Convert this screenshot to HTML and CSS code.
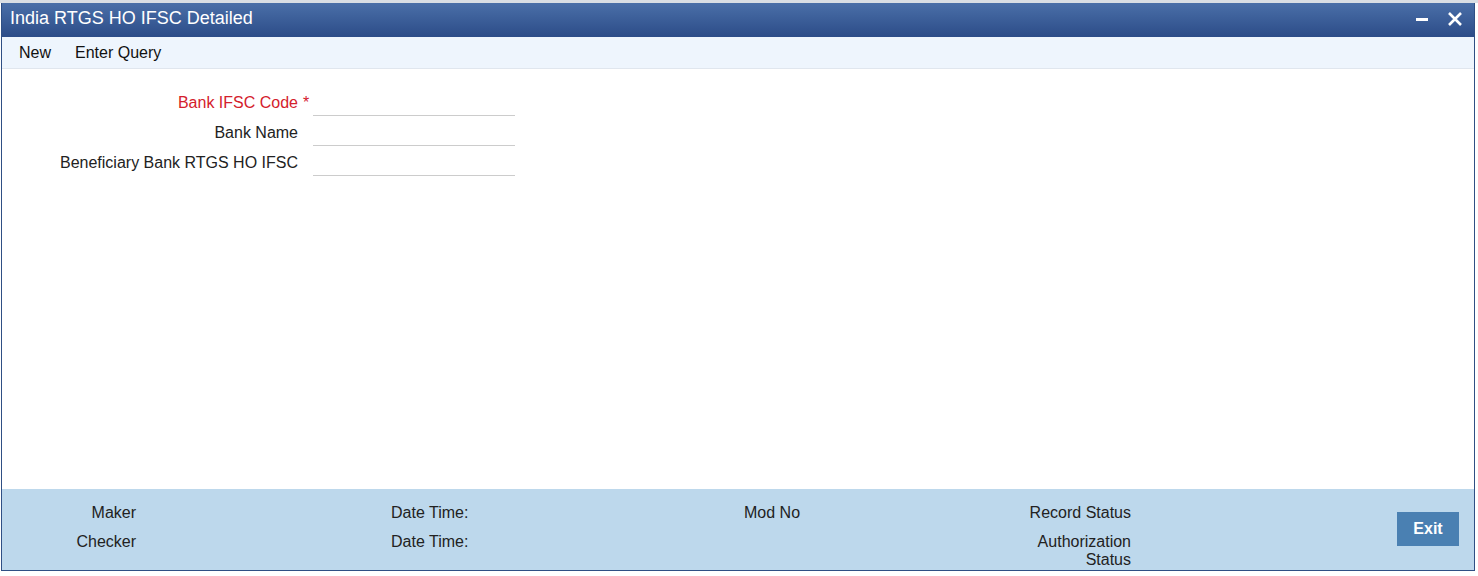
FILE: index.html
```html
<!DOCTYPE html>
<html lang="en">
<head>
    <meta charset="UTF-8">
    <title>India RTGS HO IFSC Detailed</title>
    <link rel="stylesheet" href="styles.css">
</head>
<body>
    <div class="backdrop"></div>
    <div class="window">
        <div class="title-bar">
            <span class="title">India RTGS HO IFSC Detailed</span>
            <div class="title-actions">
                <button class="icon-btn" title="Minimize">
                    <svg width="14" height="14" viewBox="0 0 14 14"><rect x="1" y="6" width="12" height="3" fill="#fff"/></svg>
                </button>
                <button class="icon-btn" title="Close">
                    <svg width="16" height="16" viewBox="0 0 16 16"><path d="M2 2 L14 14 M14 2 L2 14" stroke="#fff" stroke-width="2.6" fill="none"/></svg>
                </button>
            </div>
        </div>
        <div class="toolbar">
            <a class="tool-link">New</a>
            <a class="tool-link">Enter Query</a>
        </div>

        <div class="content">
            <div class="form-grid">
                <label class="field-label required" for="bankIfsc">Bank IFSC Code</label>
                <span class="req-mark">*</span>
                <input type="text" id="bankIfsc" class="field-input">

                <label class="field-label" for="bankName">Bank Name</label>
                <span class="req-mark"></span>
                <input type="text" id="bankName" class="field-input">

                <label class="field-label" for="benIfsc">Beneficiary Bank RTGS HO IFSC</label>
                <span class="req-mark"></span>
                <input type="text" id="benIfsc" class="field-input">
            </div>
        </div>

        <div class="footer">
            <div class="audit-grid">
                <span class="audit-label right">Maker</span>
                <span></span>
                <span class="audit-label">Date Time:</span>
                <span class="audit-label">Mod No</span>
                <span class="audit-label right">Record Status</span>
                <span></span>

                <span class="audit-label right">Checker</span>
                <span></span>
                <span class="audit-label">Date Time:</span>
                <span></span>
                <span class="audit-label right">Authorization Status</span>
                <span></span>
            </div>
            <button class="exit-btn">Exit</button>
        </div>
    </div>
</body>
</html>
```

FILE: styles.css
```css
body {
    font-family: "Liberation Sans", Arial, sans-serif;
    margin: 0;
    background-color: #fff;
    color: #222;
}
.backdrop {
    height: 3px;
    background-color: #d9dee4;
}
.window {
    width: 1474px;
    height: 568px;
    margin-left: 1px;
    display: flex;
    flex-direction: column;
    border-left: 1px solid #2f4f84;
    border-right: 1px solid #2f4f84;
    border-bottom: 1px solid #2f4f84;
    box-sizing: border-box;
}
.title-bar {
    height: 34px;
    flex-shrink: 0;
    display: flex;
    align-items: center;
    justify-content: space-between;
    padding: 0 0 0 8px;
    background: linear-gradient(#4a6fa8, #2c4c88);
    color: #fff;
}
.title {
    font-size: 18px;
    margin-top: -3px;
}
.title-actions {
    display: flex;
    align-items: center;
    gap: 18px;
    padding-right: 11px;
    margin-top: -3px;
}
.icon-btn {
    background: none;
    border: none;
    padding: 0;
    cursor: pointer;
    display: flex;
}
.toolbar {
    height: 32px;
    flex-shrink: 0;
    display: flex;
    align-items: center;
    padding-left: 5px;
    background-color: #eef5fd;
    border-bottom: 1px solid #e0e6ee;
    box-sizing: border-box;
}
.tool-link {
    font-size: 16px;
    padding: 0 12px;
    color: #111;
    cursor: pointer;
}
.content {
    flex: 1;
    background: #fff;
    padding-top: 19px;
}
.form-grid {
    display: grid;
    grid-template-columns: 296px 15px 202px;
    grid-auto-rows: 30px;
}
.field-label {
    font-size: 16px;
    line-height: 30px;
    text-align: right;
    color: #222;
}
.field-label.required,
.req-mark {
    color: #d4202c;
}
.req-mark {
    font-size: 16px;
    line-height: 30px;
    padding-left: 5px;
}
.field-input {
    height: 28px;
    border: none;
    border-bottom: 1px solid #ccc;
    box-sizing: border-box;
    font-size: 16px;
    outline: none;
    padding: 0 4px;
}
.footer {
    height: 81px;
    flex-shrink: 0;
    display: flex;
    align-items: flex-start;
    background-color: #bdd8ec;
    padding-top: 15px;
    box-sizing: border-box;
}
.audit-grid {
    display: grid;
    grid-template-columns: 134px 255px 353px 267px 120px 266px;
    grid-auto-rows: auto;
    row-gap: 11px;
}
.audit-label {
    font-size: 16px;
    line-height: 18px;
    color: #222;
}
.audit-label.right {
    text-align: right;
}
.exit-btn {
    width: 62px;
    height: 34px;
    margin-top: 8px;
    border: none;
    background-color: #4a80b2;
    color: #fff;
    font-family: "Liberation Sans", Arial, sans-serif;
    font-size: 16px;
    font-weight: bold;
    cursor: pointer;
}
```
